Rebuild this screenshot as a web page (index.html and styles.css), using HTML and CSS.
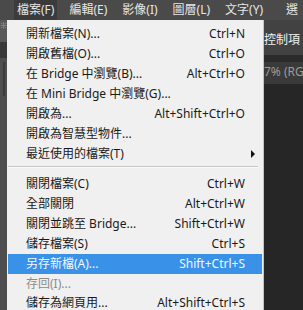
FILE: index.html
```html
<!doctype html>
<html lang="zh-Hant">
<head>
    <meta charset="UTF-8">
    <title>檔案選單</title>
    <link rel="stylesheet" href="styles.css">
</head>
<body>
    <div class="menubar">
        <span class="top-item active">檔案(F)</span>
        <span class="top-item">編輯(E)</span>
        <span class="top-item">影像(I)</span>
        <span class="top-item">圖層(L)</span>
        <span class="top-item">文字(Y)</span>
        <span class="top-item last">選</span>
    </div>

    <div class="workspace">
        <div class="toolstrip">
            <div class="tool-head">⁜</div>
            <div class="tool-dark"></div>
            <div class="tool-body"><div class="tool-bar"></div></div>
        </div>

        <div class="menu">
            <div class="row"><span>開新檔案(N)...</span><span>Ctrl+N</span></div>
            <div class="row"><span>開啟舊檔(O)...</span><span>Ctrl+O</span></div>
            <div class="row"><span>在 Bridge 中瀏覽(B)...</span><span>Alt+Ctrl+O</span></div>
            <div class="row"><span>在 Mini Bridge 中瀏覽(G)...</span><span></span></div>
            <div class="row"><span>開啟為...</span><span>Alt+Shift+Ctrl+O</span></div>
            <div class="row"><span>開啟為智慧型物件...</span><span></span></div>
            <div class="row sub"><span>最近使用的檔案(T)</span><span></span></div>
            <div class="sep"></div>
            <div class="row"><span>關閉檔案(C)</span><span>Ctrl+W</span></div>
            <div class="row"><span>全部關閉</span><span>Alt+Ctrl+W</span></div>
            <div class="row"><span>關閉並跳至 Bridge...</span><span>Shift+Ctrl+W</span></div>
            <div class="row"><span>儲存檔案(S)</span><span>Ctrl+S</span></div>
            <div class="row hover"><span>另存新檔(A)...</span><span>Shift+Ctrl+S</span></div>
            <div class="row disabled"><span>存回(I)...</span><span></span></div>
            <div class="row last"><span>儲存為網頁用...</span><span>Alt+Shift+Ctrl+S</span></div>
        </div>

        <div class="side">
            <div class="options">控制項</div>
            <div class="gap"></div>
            <div class="tab">7% (RGB/8)</div>
            <div class="canvas"></div>
        </div>
    </div>
</body>
</html>
```

FILE: styles.css
```css
body {
    margin: 0;
    width: 303px;
    height: 310px;
    overflow: hidden;
    background-color: #262626;
    font-family: 'Noto Sans', 'Noto Sans CJK TC', sans-serif;
    font-size: 12px;
}
.menubar {
    display: flex;
    height: 20px;
    padding-left: 14px;
    background-color: #4a4a4a;
    color: #e6e6e6;
    white-space: nowrap;
    overflow: hidden;
}
.top-item {
    padding: 0 3px;
    margin-right: 9px;
    line-height: 20px;
}
.top-item.active {
    background-color: #3b3b3b;
}
.top-item.last {
    margin-left: 8px;
}
.workspace {
    display: flex;
    height: 290px;
}
.toolstrip {
    width: 7px;
    display: flex;
    flex-direction: column;
    background-color: #4e4e4e;
}
.tool-head {
    height: 22px;
    background-color: #585858;
    color: #9a9a9a;
    font-size: 9px;
    line-height: 12px;
    overflow: hidden;
}
.tool-dark {
    height: 16px;
    background-color: #383838;
}
.tool-body {
    flex: 1;
    padding: 4px 0 0 3px;
}
.tool-bar {
    width: 2px;
    height: 34px;
    background-color: #3a3a3a;
}
.menu {
    width: 254px;
    padding: 4px 1px 0 1px;
    background-color: #f0f0f0;
    border-right: 1px solid #c4c4c4;
    color: #1a1a1a;
}
.row {
    position: relative;
    display: flex;
    justify-content: space-between;
    height: 20px;
    line-height: 20px;
    padding: 0 17px 0 18px;
    white-space: nowrap;
}
.row.last {
    height: 18px;
    line-height: 18px;
}
.row.hover {
    background-color: #3a91e8;
    color: #f2f7ff;
}
.row.disabled {
    color: #8c8c8c;
}
.row.sub::after {
    content: '';
    position: absolute;
    right: 7px;
    top: 6px;
    border-left: 4px solid #111;
    border-top: 4px solid transparent;
    border-bottom: 4px solid transparent;
}
.sep {
    height: 8px;
}
.sep::before {
    content: '';
    display: block;
    margin: 2px 4px 0 0;
    height: 1px;
    background-color: #c6c6c6;
    border-bottom: 1px solid #fbfbfb;
}
.side {
    flex: 1;
    display: flex;
    flex-direction: column;
    overflow: hidden;
    white-space: nowrap;
}
.options {
    height: 35px;
    line-height: 40px;
    background-color: #424242;
    color: #f0f0f0;
}
.gap {
    height: 7px;
    background-color: #2b2b2b;
}
.tab {
    height: 22px;
    line-height: 20px;
    background-color: #3a3a3a;
    color: #9c9c9c;
}
.canvas {
    flex: 1;
    background-color: #262626;
}
```
